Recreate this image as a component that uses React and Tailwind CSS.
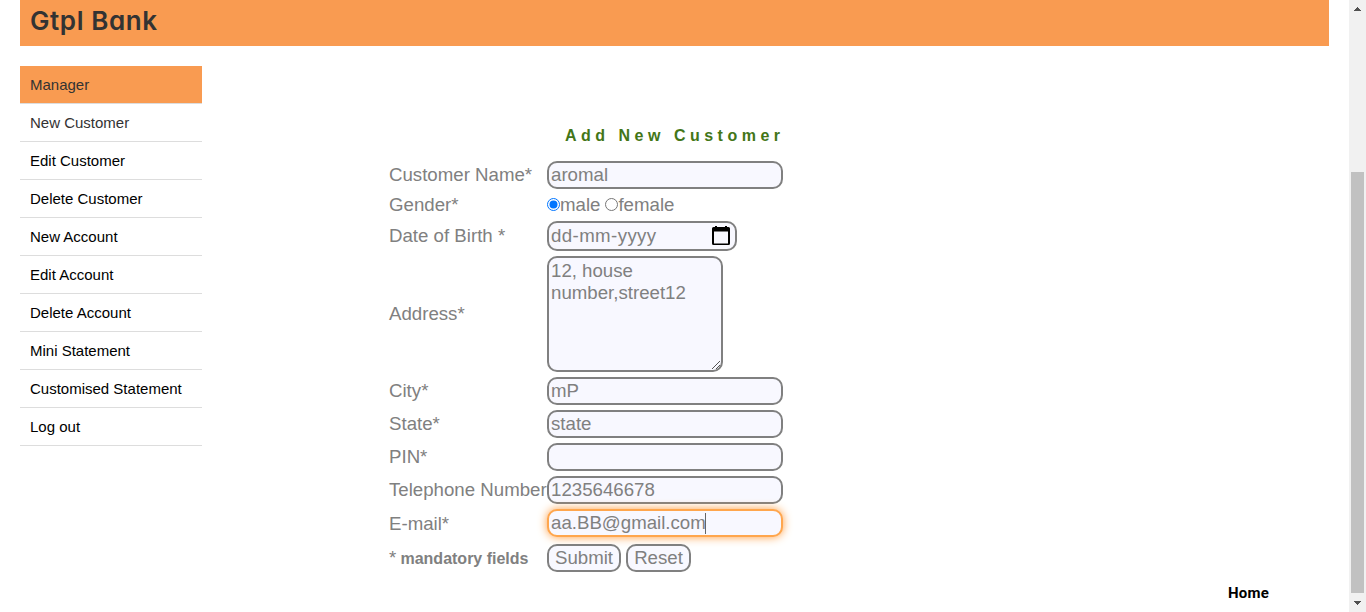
import React from "react";

const LINKS = [
  "New Customer",
  "Edit Customer",
  "Delete Customer",
  "New Account",
  "Edit Account",
  "Delete Account",
  "Mini Statement",
  "Customised Statement",
  "Log out",
];

function Row({ label, className = "h-7", children }) {
  return (
    <div className={`flex items-center ${className}`}>
      <div className="w-[158px] shrink-0 whitespace-nowrap">{label}</div>
      {children}
    </div>
  );
}

function Field({ children, className = "border-[#808080]" }) {
  return (
    <div className={`flex h-7 w-[236px] items-center rounded-[10px] border-2 bg-[#f8f8ff] px-0.5 ${className}`}>
      {children}
    </div>
  );
}

function Button({ children, className }) {
  return (
    <button className={`flex h-7 items-center justify-center rounded-[10px] border-2 border-[#808080] bg-[#f8f8ff] ${className}`}>
      {children}
    </button>
  );
}

function Sidebar() {
  return (
    <nav className="mt-5 w-[182px] shrink-0 text-[15px] leading-[37px] text-black">
      <div className="h-[38px] border-b border-[#dddddd] bg-[#f99b51] pl-2.5 text-[#333333]">Manager</div>
      {LINKS.map((name, i) => (
        <a
          key={name}
          className={`block h-[38px] whitespace-nowrap border-b border-[#dddddd] pl-2.5 ${i === 0 ? "text-[#333333]" : ""}`}
        >
          {name}
        </a>
      ))}
    </nav>
  );
}

function CustomerForm() {
  return (
    <form className="ml-[187px] mt-[79px] flex w-[410px] flex-col gap-[5px] text-[18.67px] leading-[22px] text-[#808080]">
      <h2 className="mb-2.5 h-[21px] whitespace-nowrap pl-44 text-[16px] font-bold leading-[21px] tracking-[4.5px] text-[#437618]">
        Add New Customer
      </h2>
      <Row label="Customer Name*"><Field>aromal</Field></Row>
      <Row label="Gender*" className="h-[22px]">
        <svg className="mb-0.5 h-[13px] w-[13px]" viewBox="0 0 13 13">
          <circle cx="6.5" cy="6.5" r="6" fill="#fff" stroke="#0075ff" />
          <circle cx="6.5" cy="6.5" r="4" fill="#0075ff" />
        </svg>
        <span>male</span>
        <svg className="mb-0.5 ml-[5px] h-[13px] w-[13px]" viewBox="0 0 13 13">
          <circle cx="6.5" cy="6.5" r="6" fill="#fff" stroke="#767676" />
        </svg>
        <span>female</span>
      </Row>
      <Row label="Date of Birth *" className="h-[30px]">
        <div className="flex h-[30px] w-[190px] items-center justify-between rounded-[10px] border-2 border-[#808080] bg-[#f8f8ff] pl-0.5 pr-[5px]">
          <span className="tracking-[0.4px]">dd-mm-yyyy</span>
          <svg className="h-5 w-[18px]" viewBox="0 0 18 20">
            <path d="M3 0h2v1h8V0h2v1h1.500A1.500 1.500 0 0 1 18 2.500V17.500a1.500 1.500 0 0 1-1.500 1.500h-15A1.500 1.500 0 0 1 0 17.500V2.500A1.500 1.500 0 0 1 1.500 1H3zM2 5.500V17.500h14V5.500z" fill="#000" fillRule="evenodd" />
          </svg>
        </div>
      </Row>
      <Row label="Address*" className="h-[116px]">
        <div className="flex h-[116px] w-44 rounded-[10px] border-2 border-[#808080] bg-[#f8f8ff] pl-0.5 pt-0.5">
          <p className="w-[150px]">12, house<br />number,street12</p>
          <svg className="ml-auto mt-auto h-[10px] w-[10px] shrink-0" viewBox="0 0 10 10" fill="none" stroke="#555">
            <path d="M1 9 9 1M5 9 9 5" />
          </svg>
        </div>
      </Row>
      <Row label="City*"><Field>mP</Field></Row>
      <Row label="State*"><Field>state</Field></Row>
      <Row label="PIN*"><Field /></Row>
      <Row label="Telephone Number"><Field>1235646678</Field></Row>
      <Row label={<span className="block pt-px">E-mail*</span>}>
        <Field className="border-[#ffa64d] shadow-[0_0_10px_#ff9c3f]">
          <span>aa.BB@gmail.com</span>
          <span className="-ml-px h-[21px] w-px bg-[#666]" />
        </Field>
      </Row>
      <Row label={<><span className="tracking-[-0.5px]">* </span><b className="text-[16px]">mandatory fields</b></>} className="mt-0.5 h-7">
        <Button className="w-[74px]">Submit</Button>
        <Button className="ml-[5px] w-[65px]">Reset</Button>
      </Row>
    </form>
  );
}

function Scrollbar() {
  return (
    <div className="flex h-full w-[17px] shrink-0 flex-col items-center bg-[#f1f1f1]">
      <svg className="h-[17px] w-[17px] shrink-0" viewBox="0 0 17 17" shapeRendering="crispEdges">
        <path d="M8 7h1v1h1v1h1v1h1v1H5v-1h1V9h1V8h1z" fill="#505050" />
      </svg>
      <div className="mt-[155px] h-[421px] w-[13px] bg-[#c1c1c1]" />
      <svg className="mt-auto h-[17px] w-[17px] shrink-0" viewBox="0 0 17 17" shapeRendering="crispEdges">
        <path d="M5 6h7v1h-1v1h-1v1H9v1H8V9H7V8H6V7H5z" fill="#505050" />
      </svg>
    </div>
  );
}

export default function App() {
  return (
    <div className="flex h-[612px] w-[1366px] overflow-hidden bg-white font-['Liberation_Sans',Arial,sans-serif]">
      <main className="flex min-w-0 flex-1 flex-col pl-5 pr-5">
        <header className="h-[46px] shrink-0 bg-[#f99b51] pl-2.5">
          <h1 className="text-[26px] font-semibold leading-[41px] tracking-[0.6px] text-[#333333] font-['Inter',sans-serif] [font-feature-settings:'cv11']">
            Gtpl Bank
          </h1>
        </header>
        <div className="flex items-start">
          <Sidebar />
          <CustomerForm />
        </div>
        <footer className="mt-[11px] flex justify-end pr-[60px] text-[15px] font-bold leading-5 tracking-[0.2px] text-black font-['Roboto',sans-serif]">
          Home
        </footer>
      </main>
      <Scrollbar />
    </div>
  );
}
